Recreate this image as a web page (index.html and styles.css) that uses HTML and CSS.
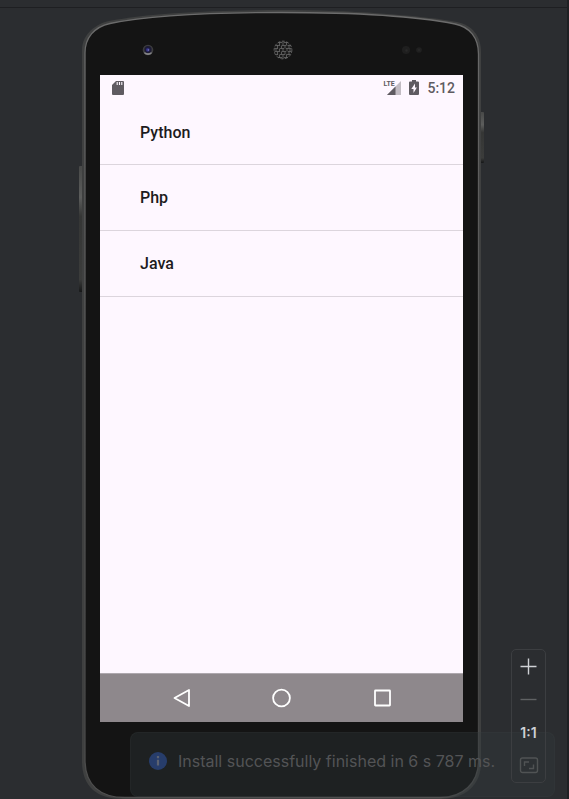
FILE: index.html
```
<!DOCTYPE html>
<html lang="en">
<head>
<meta charset="utf-8">
<meta name="viewport" content="width=device-width, initial-scale=1">
<title>Running Devices</title>
<link rel="stylesheet" href="styles.css">
</head>
<body>
<div class="panel">
  <header class="panel-bar"></header>
  <main class="stage">
    <section class="phone">
      <svg class="frame" viewBox="0 0 406 788" preserveAspectRatio="none" aria-hidden="true">
        <defs>
          <linearGradient id="rocker" x1="0" y1="0" x2="0" y2="1">
            <stop offset="0" stop-color="#484948"/>
            <stop offset=".25" stop-color="#5c5d5c"/>
            <stop offset=".4" stop-color="#353635"/>
            <stop offset=".9" stop-color="#3b3c3b"/>
            <stop offset="1" stop-color="#161718"/>
          </linearGradient>
          <linearGradient id="rim" x1="0" y1="0" x2="0" y2="1">
            <stop offset="0" stop-color="#6c6c6c"/>
            <stop offset=".2" stop-color="#5e5e5e"/>
            <stop offset=".9" stop-color="#464646"/>
            <stop offset="1" stop-color="#505050"/>
          </linearGradient>
        </defs>
        <rect x="0" y="155" width="5" height="126" rx="1" fill="url(#rocker)"/>
        <rect x="400" y="101" width="5" height="51" rx="1" fill="url(#rocker)"/>
        <path fill="#3f4040" d="M3 39C3 26 13 14 30 10C70 2 135 -1 202 -1S340 4 378 11C393 14 402 25 402 41V752C402 774 386 788 362 788H44C18 788 3 776 3 750Z"/>
        <path fill="#141414" stroke="url(#rim)" stroke-width="1.3" d="M6 42C6 27 15 16 31 12.500C72 4 136 1.500 202 1.500S336 5 376 13C391 16 399.500 27 399.500 43V750C399.500 772 384 786.500 361 786.500H46C21 786.500 6 774 6 749Z"/>
      </svg>
      <div class="hardware">
        <svg class="camera" viewBox="0 0 12 12" aria-hidden="true">
          <circle cx="6" cy="6" r="5.300" fill="#3c3c3e"/>
          <path d="M2.500 8.500A4.500 4.500 0 0 0 9.500 8.500" fill="none" stroke="#858587" stroke-width="1.600"/>
          <circle cx="6" cy="5.500" r="3.600" fill="#1c1b34"/>
          <circle cx="5.800" cy="5.800" r="1.900" fill="#302e80"/>
          <circle cx="6.300" cy="6" r=".7" fill="#8b8dc4"/>
        </svg>
        <svg class="speaker" viewBox="0 0 20 20" aria-hidden="true">
          <circle cx="10" cy="10" r="9.300" fill="#1b1b1b"/>
          <g fill="none" stroke="#686868" stroke-width=".8">
            <circle cx="10" cy="10" r="8.900" stroke-dasharray="3 1.500"/>
            <path d="M5 2.500H9M11 2.500H15M2.500 5.500H7M9 5.500H13M14.500 5.500H18M1.500 8.500H5M7 8.500H11M13 8.500H18.500M1.500 11.500H7M9 11.500H13M15 11.500H18.500M2.500 14.500H5M7 14.500H12M13.500 14.500H17.500M5 17.500H9M11 17.500H15"/>
            <path d="M6.500 2V5.500M10 1V5.500M13.500 2V5.500M4.500 5V8.500M8.500 5.500V8.500M12 5.500V8.500M16 5V8.500M3 8.500V11.500M6.500 8.500V11.500M10 8.500V11.500M14 8.500V11.500M17 8.500V11.500M4.500 11.500V15M8.500 11.500V14.500M12 11.500V14.500M16 11.500V15M6.500 14.500V18M10 14.500V19M13.500 14.500V18"/>
          </g>
        </svg>
        <svg class="sensors" viewBox="0 0 22 10" aria-hidden="true">
          <circle cx="5" cy="5" r="4" fill="#1f1f1f"/>
          <circle cx="5.500" cy="5.500" r="1.200" fill="#292929"/>
          <circle cx="18" cy="5" r="2.800" fill="#202020"/>
          <circle cx="18" cy="5" r="1" fill="#272727"/>
        </svg>
      </div>
      <div class="screen">
        <div class="status">
          <svg class="sd" viewBox="0 0 12 14" aria-hidden="true">
            <path fill="#5f5b61" d="M4 0H11Q12 0 12 1V13Q12 14 11 14H1Q0 14 0 13V4Z"/>
            <path stroke="#fef7ff" stroke-width="1.100" d="M5.200 1V4M7.500 1V4M9.800 1V4"/>
          </svg>
          <div class="signal">
            <span class="lte">LTE</span>
            <svg class="bars" viewBox="0 0 14 14" aria-hidden="true">
              <path fill="#c2bcc3" d="M14 0V14H0Z"/>
              <path fill="#5f5b61" d="M8.500 5.500V14H0Z"/>
            </svg>
          </div>
          <svg class="battery" viewBox="0 0 10 15" aria-hidden="true">
            <path fill="#5f5b61" d="M3 0H7V1.500H9Q10 1.500 10 2.500V14Q10 15 9 15H1Q0 15 0 14V2.500Q0 1.500 1 1.500H3Z"/>
            <path fill="#fef7ff" d="M6 3.500L2.300 9H4.500V13L7.900 7.500H6Z"/>
          </svg>
          <time class="clock">5:12</time>
        </div>
        <ul class="list">
          <li class="row">Python</li>
          <li class="row">Php</li>
          <li class="row">Java</li>
        </ul>
        <nav class="nav">
          <button class="key" aria-label="Back"><svg class="key-icon" viewBox="0 0 24 24"><path d="M19 4V20L4.500 12Z"/></svg></button>
          <button class="key" aria-label="Home"><svg class="key-icon" viewBox="0 0 24 24"><circle cx="11.500" cy="12" r="8.400"/></svg></button>
          <button class="key" aria-label="Overview"><svg class="key-icon" viewBox="0 0 24 24"><rect x="5" y="4.500" width="15" height="15" rx=".5"/></svg></button>
        </nav>
      </div>
    </section>
    <div class="toast" role="status">
      <svg class="info" viewBox="0 0 18 18" aria-hidden="true">
        <circle cx="9" cy="9" r="9" fill="#273d6b"/>
        <path stroke="#5c6270" stroke-width="2.200" d="M9 7.800V13.500M9 4V6.200"/>
      </svg>
      <span>Install successfully finished in 6 s 787 ms.</span>
    </div>
    <div class="zoom">
      <button class="tool" aria-label="Zoom in"><svg class="tool-icon" viewBox="0 0 20 20"><path d="M9.500 1.500V17.500M1.500 9.500H17.500" stroke="#cfd1d5"/></svg></button>
      <button class="tool" aria-label="Zoom out"><svg class="tool-icon" viewBox="0 0 20 20"><path d="M1.500 9.500H17.500" stroke="#606264"/></svg></button>
      <button class="tool">1:1</button>
      <button class="tool" aria-label="Fit to window"><svg class="tool-icon" viewBox="0 0 20 20"><rect x="1.500" y="2" width="17" height="14.500" rx="2" stroke="#505354"/><path d="M5.500 10V6H10M14.500 8.500V12.500H10" stroke="#505354"/></svg></button>
    </div>
  </main>
</div>
</body>
</html>
```
FILE: styles.css
```
* { box-sizing: border-box; }

body {
  margin: 0;
  background: #2b2d30;
  font-family: Roboto, "Noto Sans", sans-serif;
}

button {
  margin: 0;
  padding: 0;
  border: 0;
  background: none;
  font: inherit;
}

svg { display: block; flex: none; }

.panel {
  display: flex;
  flex-direction: column;
  min-height: 100vh;
  border-right: 2px solid #1f2023;
}

.panel-bar {
  height: 8px;
  border-bottom: 1px solid #1e1f22;
}

.stage {
  position: relative;
  flex: 1;
  display: flex;
  padding: 3px 82px 0 79px;
}

.phone {
  position: relative;
  flex: 1;
  display: flex;
  flex-direction: column;
  padding: 0 22px 77px 21px;
}

.frame {
  position: absolute;
  inset: 0;
  width: 100%;
  height: 100%;
  overflow: visible;
}

.hardware {
  position: relative;
  display: grid;
  grid-template-columns: 1fr auto 1fr;
  align-items: center;
  height: 64px;
  padding: 14px 40px 0 42px;
}

.camera { width: 12px; height: 12px; }
.speaker { width: 20px; height: 20px; }
.sensors { width: 22px; height: 10px; justify-self: end; }

.screen {
  position: relative;
  flex: 1;
  display: flex;
  flex-direction: column;
  background: #fef7ff;
  color: #1d1b20;
}

.status {
  display: flex;
  align-items: center;
  gap: 8px;
  height: 25px;
  padding: 0 8px 0 12px;
  color: #5f5b61;
}

.sd { width: 12px; height: 14px; }

.signal {
  display: flex;
  margin-left: auto;
}

.lte {
  width: 4px;
  font: 700 7px/7px Roboto, sans-serif;
}

.bars { width: 14px; height: 14px; }
.battery { width: 10px; height: 15px; }

.clock {
  font-size: 14px;
  font-weight: 500;
}

.list {
  flex: 1;
  margin: 0;
  padding: 0;
  list-style: none;
}

.row {
  display: flex;
  align-items: center;
  height: 66px;
  padding-left: 40px;
  border-bottom: 1px solid #dcd5dd;
  font-size: 16px;
  font-weight: 500;
}

.row:first-child { height: 65px; }

.nav {
  display: flex;
  justify-content: center;
  height: 49px;
  border-top: 1px solid #aea8ae;
  background: #8e888c;
}

.key {
  display: grid;
  place-items: center;
  width: 100px;
}

.key-icon {
  width: 24px;
  height: 24px;
  fill: none;
  stroke: #fff;
  stroke-width: 1.8;
  stroke-linejoin: round;
}

.zoom {
  position: absolute;
  right: 21px;
  bottom: 16px;
  display: flex;
  flex-direction: column;
  width: 35px;
  border: 1px solid #3c3e41;
  border-radius: 5px;
}

.tool {
  display: grid;
  place-items: center;
  height: 33px;
  color: #ced0d6;
  font: 600 14px/16px Inter, sans-serif;
}

.tool-icon {
  width: 20px;
  height: 20px;
  fill: none;
  stroke-width: 1.4;
}

.toast {
  position: absolute;
  right: 12px;
  bottom: 2px;
  display: flex;
  align-items: center;
  gap: 11px;
  width: 425px;
  height: 65px;
  padding: 0 18px 8px;
  border: 1px solid rgba(70, 74, 77, 0.15);
  border-radius: 8px;
  background: rgba(50, 58, 61, 0.36);
  color: #535456;
  font: 400 16px/20px Inter, sans-serif;
  font-optical-sizing: none;
  white-space: nowrap;
}

.info { width: 18px; height: 18px; }
```
